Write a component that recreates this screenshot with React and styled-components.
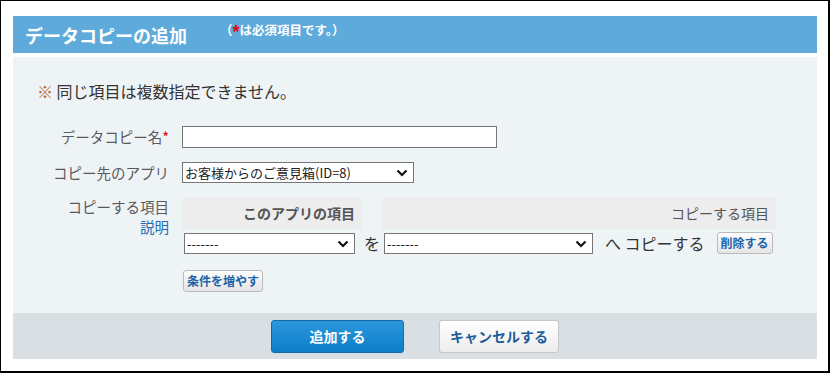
import styled, { createGlobalStyle } from "styled-components";

const GlobalStyle = createGlobalStyle`
  body {
    margin: 0;
    background: #ffffff;
    font-family: "Noto Sans CJK JP", "Noto Sans", sans-serif;
  }
`;

const Chevron = () => (
  <S.Chevron width="12" height="8" viewBox="0 0 12 8">
    <path d="M1.5 1.5 L6 6 L10.5 1.5" fill="none" stroke="#111" strokeWidth="2.2" />
  </S.Chevron>
);

const Select = ({ width, value }) => (
  <S.SelectBox $width={width}>
    <S.SelectValue>{value}</S.SelectValue>
    <Chevron />
  </S.SelectBox>
);

export default function App() {
  return (
    <>
      <GlobalStyle />
      <S.Frame>
        <S.Header>
          <S.Title>データコピーの追加</S.Title>
          <S.HeaderNote>
            （<S.Required $big>*</S.Required>は必須項目です。）
          </S.HeaderNote>
        </S.Header>
        <S.Panel>
          <S.Notice>
            <S.Mark>※</S.Mark> 同じ項目は複数指定できません。
          </S.Notice>
          <S.Form>
            <S.Label>
              データコピー名<S.Required>*</S.Required>
            </S.Label>
            <S.Input />
            <S.Label>コピー先のアプリ</S.Label>
            <Select width={232} value="お客様からのご意見箱(ID=8)" />
            <S.StackLabel>
              コピーする項目
              <S.Link>説明</S.Link>
            </S.StackLabel>
            <div>
              <S.Table>
                <S.HeadCell $bold>このアプリの項目</S.HeadCell>
                <div />
                <S.HeadCell>コピーする項目</S.HeadCell>
                <S.Cell>
                  <Select width={171} value="-------" />
                </S.Cell>
                <S.Joiner>を</S.Joiner>
                <S.Cell>
                  <Select width={209} value="-------" />
                  <S.Joiner $gap={12}>へ コピーする</S.Joiner>
                  <S.SmallButton>削除する</S.SmallButton>
                </S.Cell>
              </S.Table>
              <S.AddRow>
                <S.SmallButton>条件を増やす</S.SmallButton>
              </S.AddRow>
            </div>
          </S.Form>
        </S.Panel>
        <S.Footer>
          <S.Button $primary $width={133}>追加する</S.Button>
          <S.Button $width={120}>キャンセルする</S.Button>
        </S.Footer>
      </S.Frame>
    </>
  );
}

const S = {};

S.Frame = styled.div`
  width: 830px;
  height: 373px;
  box-sizing: border-box;
  border-style: solid;
  border-color: #000000;
  border-width: 1px 2px 2px 1px;
  padding: 15px 11px 12px 12px;
  display: flex;
  flex-direction: column;
`;

S.Header = styled.div`
  height: 37px;
  flex-shrink: 0;
  display: flex;
  align-items: center;
  padding-left: 12px;
  background-color: #5daadb;
  color: #ffffff;
`;

S.Title = styled.div`
  font-size: 18px;
  font-weight: 700;
  line-height: 22px;
`;

S.HeaderNote = styled.div`
  align-self: flex-start;
  margin: 6px 0 0 33px;
  font-size: 12.5px;
  font-weight: 700;
  line-height: 16px;
  white-space: nowrap;
`;

S.Required = styled.span`
  color: #e60012;
  font-size: ${(props) => (props.$big ? "18px" : "inherit")};
  font-family: ${(props) => (props.$big ? '"Liberation Sans", sans-serif' : "inherit")};
  vertical-align: ${(props) => (props.$big ? "-3px" : "baseline")};
`;

S.Panel = styled.div`
  flex: 1;
  margin-top: 4px;
  padding: 23px 0 0 0;
  background-color: #eef3f6;
`;

S.Notice = styled.div`
  margin-left: 24px;
  font-size: 16px;
  line-height: 22px;
  color: #333333;
`;

S.Mark = styled.span`
  color: #b8642c;
`;

S.Form = styled.div`
  display: grid;
  grid-template-columns: 156px 1fr;
  column-gap: 13px;
  row-gap: 14px;
  align-items: center;
  margin-top: 24px;
`;

S.Label = styled.div`
  font-size: 14.5px;
  line-height: 20px;
  color: #5a5a5a;
  text-align: right;
  white-space: nowrap;
`;

S.StackLabel = styled(S.Label)`
  align-self: start;
  display: flex;
  flex-direction: column;
  align-items: flex-end;
`;

S.Link = styled.span`
  color: #1f6cb2;
  cursor: pointer;
`;

S.Input = styled.input`
  width: 315px;
  height: 22px;
  box-sizing: border-box;
  border: 1px solid #767676;
  background: #ffffff;
  outline: none;
`;

S.SelectBox = styled.div`
  position: relative;
  width: ${(props) => props.$width}px;
  height: 21px;
  box-sizing: border-box;
  border: 1px solid #767676;
  background: #ffffff;
  display: flex;
  align-items: center;
  padding-left: 2px;
  flex-shrink: 0;
`;

S.SelectValue = styled.span`
  font-size: 13px;
  color: #222222;
  white-space: nowrap;
`;

S.Chevron = styled.svg`
  position: absolute;
  right: 5px;
  top: 6px;
  pointer-events: none;
`;

S.Table = styled.div`
  display: grid;
  grid-template-columns: 180px 20px 394px;
  grid-template-rows: 32px auto;
  row-gap: 3px;
`;

S.HeadCell = styled.div`
  background-color: #ededed;
  text-align: right;
  padding-right: 7px;
  font-size: 14px;
  line-height: 32px;
  font-weight: ${(props) => (props.$bold ? 700 : 400)};
  color: #555555;
`;

S.Cell = styled.div`
  display: flex;
  align-items: center;
  padding-left: 2px;
`;

S.Joiner = styled.span`
  font-size: 16px;
  line-height: 21px;
  color: #333333;
  text-align: center;
  white-space: nowrap;
  margin: 0 ${(props) => props.$gap || 0}px;
  align-self: center;
`;

S.SmallButton = styled.button`
  height: 22px;
  padding: 0 3px;
  box-sizing: border-box;
  border: 1px solid #bababa;
  border-radius: 3px;
  background: linear-gradient(#fdfdfd, #e5e5e5);
  font-family: inherit;
  font-size: 12px;
  font-weight: 700;
  line-height: 20px;
  color: #1f64a8;
  cursor: pointer;
`;

S.AddRow = styled.div`
  margin: 16px 0 0 1px;
  display: flex;
`;

S.Footer = styled.div`
  height: 46px;
  flex-shrink: 0;
  display: flex;
  justify-content: center;
  align-items: center;
  gap: 35px;
  background-color: #d9dfe3;
`;

S.Button = styled.button`
  width: ${(props) => props.$width}px;
  height: 33px;
  box-sizing: border-box;
  border-radius: 3px;
  border: 1px solid ${(props) => (props.$primary ? "#1569a6" : "#c3c7ca")};
  background: ${(props) => (props.$primary ? "linear-gradient(#2b97dc, #0d7ec9)" : "linear-gradient(#ffffff, #ececec)")};
  color: ${(props) => (props.$primary ? "#ffffff" : "#1c5c9a")};
  font-family: inherit;
  font-size: 14px;
  font-weight: 700;
  cursor: pointer;
`;
